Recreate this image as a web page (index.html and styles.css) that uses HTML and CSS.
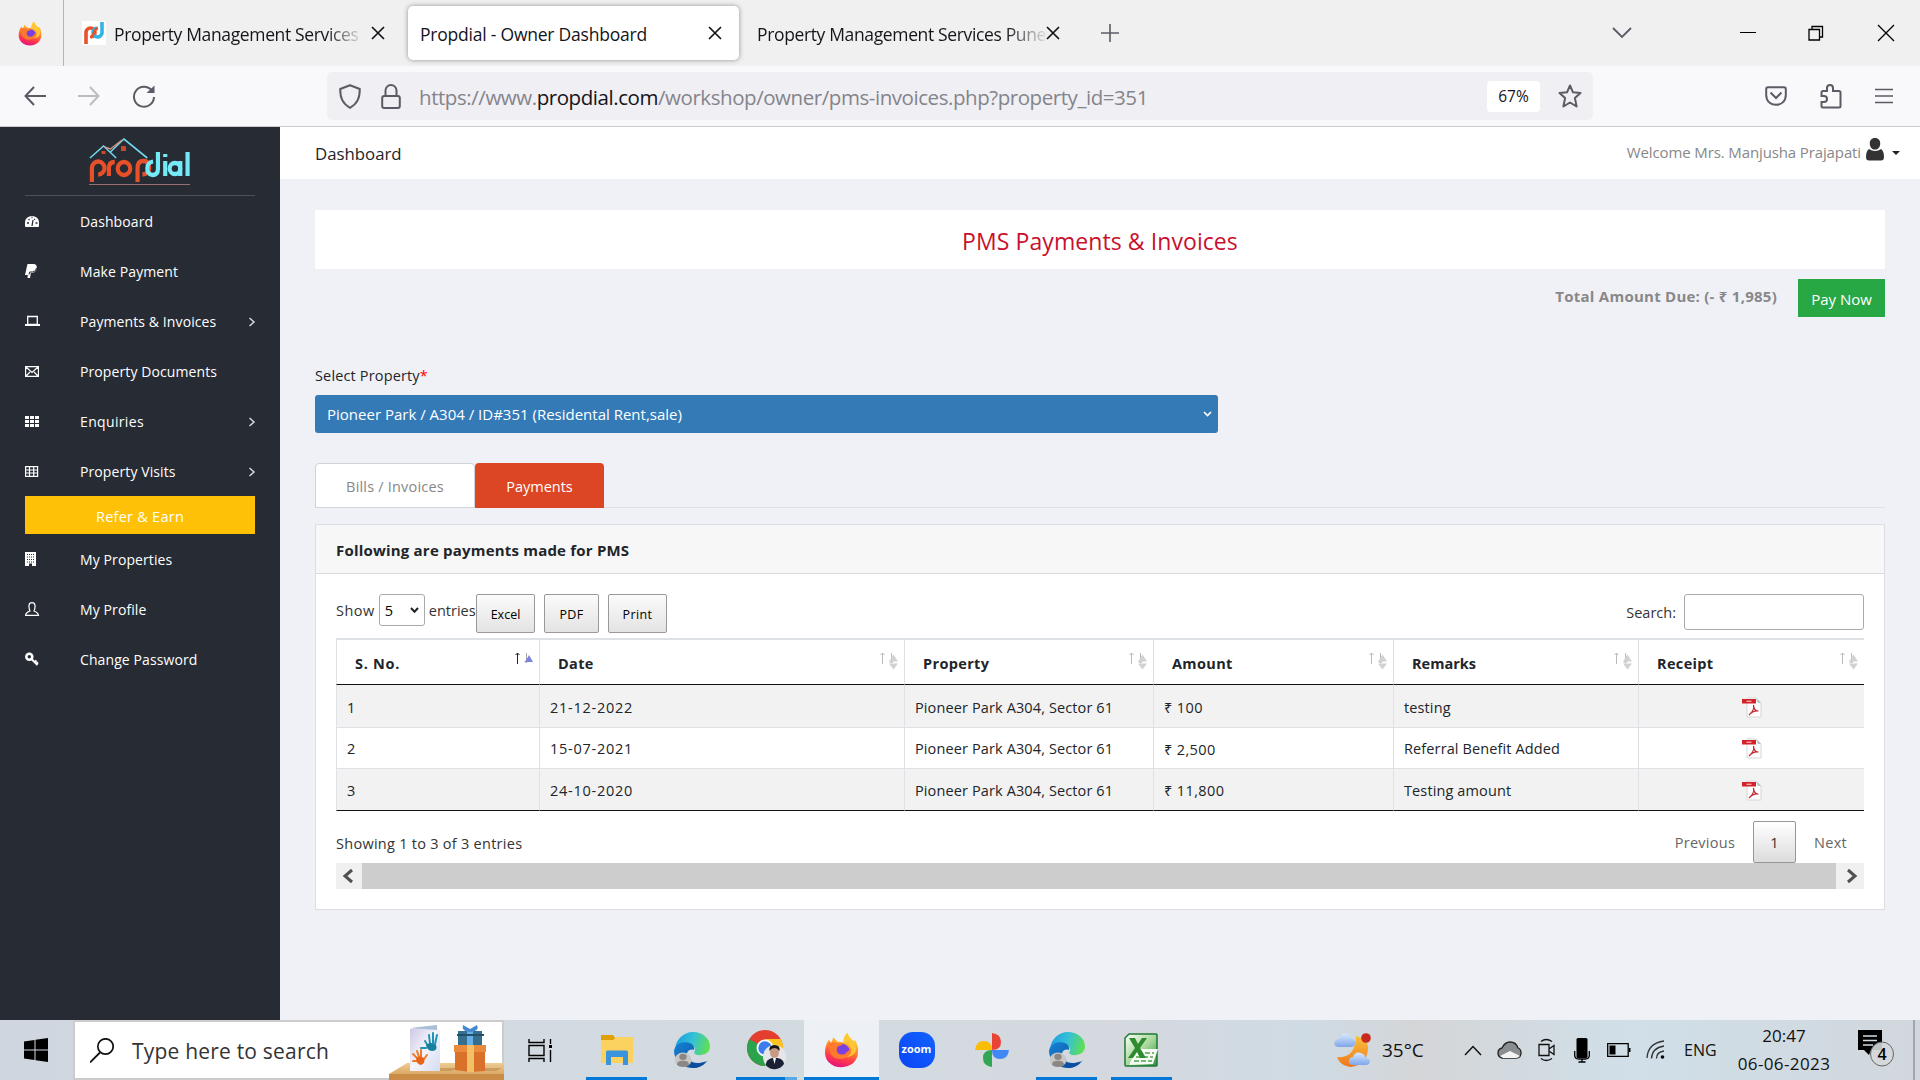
FILE: index.html
```html
<!DOCTYPE html>
<html lang="en">
<head>
<meta charset="utf-8">
<title>Propdial - Owner Dashboard</title>
<link rel="stylesheet" href="styles.css">
</head>
<body>
<svg class="defs" aria-hidden="true">
  <defs>
    <linearGradient id="ffBody" x1="0.7" y1="0" x2="0.4" y2="1"><stop offset="0" stop-color="#fff04a"/><stop offset=".4" stop-color="#ff9a28"/><stop offset=".75" stop-color="#ff3b4a"/><stop offset="1" stop-color="#e5127f"/></linearGradient>
    <linearGradient id="edgeTop" x1="0" y1="0.3" x2="1" y2="0.5"><stop offset="0" stop-color="#1b9de2"/><stop offset=".5" stop-color="#35c1d6"/><stop offset="1" stop-color="#5fe04f"/></linearGradient>
    <linearGradient id="edgeLow" x1="0" y1="0" x2="1" y2="1"><stop offset="0" stop-color="#1583d8"/><stop offset="1" stop-color="#0c4a94"/></linearGradient>
    <linearGradient id="moon" x1="0" y1="0" x2="0" y2="1"><stop offset="0" stop-color="#f9c23c"/><stop offset="1" stop-color="#f0761e"/></linearGradient>
    <linearGradient id="cloudFill" x1="0" y1="0" x2="0" y2="1"><stop offset="0" stop-color="#d8e9fd"/><stop offset="1" stop-color="#7fa6ea"/></linearGradient>
    <linearGradient id="shelf" x1="0" y1="0" x2="0" y2="1"><stop offset="0" stop-color="#efcb92"/><stop offset="1" stop-color="#dba965"/></linearGradient>
    <linearGradient id="cardPaper" x1="0" y1="0" x2="1" y2="1"><stop offset="0" stop-color="#c9c4e4"/><stop offset=".5" stop-color="#f5f3fb"/><stop offset="1" stop-color="#d3ddf2"/></linearGradient>
    <linearGradient id="xlFill" x1="0" y1="0" x2="1" y2="1"><stop offset="0" stop-color="#fff"/><stop offset=".5" stop-color="#a9d99b"/><stop offset="1" stop-color="#2f8f3e"/></linearGradient>
  </defs>
  <symbol id="firefox" viewBox="0 0 36 44" preserveAspectRatio="none">
    <path d="M18 43C8 43 1 35.500 1 25c0-6 1.500-11 4-15.500l2.500 4 2-7L14 12c3 0 5 .5 6 1 0-5 1.500-9 4-12 1.500 5 4 6.500 6 10l2-1c2 4 3.500 9 3 15.500C34.500 36 27.500 43 18 43z" fill="url(#ffBody)"/>
    <circle cx="18" cy="23" r="8.500" fill="#7a41e0"/>
    <path d="M4 14c4-2 8-2 10 0l6-1c-1 3-3 4-6 5-1 4 2 7 6 7 4 0 6-2 7-5 2 7-3 13-10 13S6 28 6 22z" fill="#ff7a2d"/>
    <path d="M20 13c4 0 7 3 8 7 1 6-2 9-5 11 8-1 12-8 9-16-3-5-7-8-8-14-3 3-4 8-4 12z" fill="#ffc736"/>
    <circle cx="18.500" cy="22" r="5.500" fill="#7a41e0"/>
  </symbol>
  <symbol id="edge" viewBox="0 0 36 42" preserveAspectRatio="none">
    <path d="M1 20C2 8 10 0 19 0c10 0 17 8 17 17 0 7-5 10-11 10-4 0-6-2-4-5 1-6-5-9-10-9-4 0-8 3-10 7z" fill="url(#edgeTop)"/>
    <path d="M0 22c1-7 7-11 12-10 6 0 9 5 8 9-5-2-8 3-7 8 2 7 10 9 19 5-3 5-8 8-14 8C8 42 0 33 0 22z" fill="url(#edgeLow)"/>
    <path d="M13 24c-1 9 6 14 13 13 4-.5 6-2 8-4-4 6-9 9-15 9-7-2-11-10-6-18z" fill="#0d4f9e"/>
    <circle cx="9" cy="32.500" r="8.500" fill="#c9c7c5"/><circle cx="9" cy="29" r="3.700" fill="#8a8784"/><path d="M3 38.500c0-4 2.500-5 6-5s6 1 6 5a9 9 0 0 1-12 0z" fill="#8a8784"/>
  </symbol>
  <symbol id="pdf" viewBox="0 0 20 21">
    <path d="M5 1h9l5 5v14H5z" fill="#fff" stroke="#d5d5d5"/><path d="M14 1l5 5h-3z" fill="#b9bec2"/>
    <rect x="0" y="2" width="14" height="4.500" fill="#d2232a"/><path d="M4.500 4.300h5" stroke="#f3a6a8" stroke-width="1.400"/>
    <path d="M11.500 8c.8 3-1 7-4.500 10 3-3.500 6-4.500 9.500-4-3 .2-4.700-2-5-6z" fill="none" stroke="#c22a30" stroke-width="1.200"/>
  </symbol>
  <symbol id="sort" viewBox="0 0 24 20">
    <path d="M4.500 14V3M2.500 5l2-2 2 2M13.500 3v10M11.500 11l2 2 2-2" fill="none" stroke="#b9babc"/>
    <path d="M11 11.500l4.500-7 4.500 7zM11 13.500h9l-4.500 6z" fill="#d2d2d2"/>
  </symbol>
  <symbol id="close" viewBox="0 0 14 14"><path d="M1 1l12 12M13 1L1 13" stroke="#15141a" stroke-width="1.700" fill="none"/></symbol>
  <symbol id="chev" viewBox="0 0 8 10"><path d="M1.500 1l4.500 4-4.500 4" fill="none" stroke="#d7dade" stroke-width="1.500"/></symbol>
</svg>

<header class="tabs">
  <div class="pinned"><svg width="24" height="25"><use href="#firefox"/></svg></div>
  <div class="tab first">
    <svg width="24" height="24" viewBox="0 0 24 24"><path d="M0 0h24v24H0z" fill="#fff"/><path d="M4 23V11a4.500 4.500 0 1 1 5 5" fill="none" stroke="#e8512a" stroke-width="3.600"/><path d="M20 1v11a4.500 4.500 0 1 1-5-5" fill="none" stroke="#31b3e6" stroke-width="3.600"/><path d="M8 16c5 0 3-8 8-9" fill="none" stroke="#e8512a" stroke-width="2.500"/></svg>
    <span class="tab-title faded">Property Management Services</span>
    <svg class="x" width="14" height="14"><use href="#close"/></svg>
  </div>
  <div class="tab active">
    <span class="tab-title">Propdial - Owner Dashboard</span>
    <svg class="x" width="14" height="14"><use href="#close"/></svg>
  </div>
  <div class="tab third">
    <span class="tab-title faded">Property Management Services Pune</span>
    <svg class="x" width="14" height="14"><use href="#close"/></svg>
  </div>
  <svg class="plus" width="20" height="20" viewBox="0 0 20 20"><path d="M10 1v18M1 10h18" stroke="#5b5b66" stroke-width="1.600"/></svg>
  <div class="winctl">
    <svg width="20" height="12" viewBox="0 0 20 12"><path d="M1 1l9 9 9-9" fill="none" stroke="#5b5b66" stroke-width="1.800"/></svg>
    <svg width="16" height="16" viewBox="0 0 16 16"><path d="M0 7.500h16" stroke="#000"/></svg>
    <svg width="16" height="16" viewBox="0 0 16 16"><path d="M1 4.500h10.500V15H1zM4 4.500V1.500h10.500V12h-3" fill="none" stroke="#000" stroke-width="1.300"/></svg>
    <svg width="18" height="18" viewBox="0 0 18 18"><path d="M1 1l16 16M17 1L1 17" stroke="#000" stroke-width="1.300"/></svg>
  </div>
</header>

<nav class="toolbar">
  <div class="navbtns">
    <svg width="22" height="20" viewBox="0 0 22 20"><path d="M10 1L1.500 10l8.500 9M1.500 10H22" fill="none" stroke="#5b5b66" stroke-width="2"/></svg>
    <svg width="22" height="20" viewBox="0 0 22 20"><path d="M12 1l8.500 9-8.500 9M20.500 10H0" fill="none" stroke="#bcbcc2" stroke-width="2"/></svg>
    <svg width="24" height="24" viewBox="0 0 24 24"><path d="M20.500 7.500A10 10 0 1 0 22 13" fill="none" stroke="#5b5b66" stroke-width="2"/><path d="M22.500 1.500v7.500h-8z" fill="#5b5b66"/></svg>
  </div>
  <div class="urlbar">
    <svg width="22" height="25" viewBox="0 0 22 25"><path d="M11 1.200L20.800 5c0 9-2.300 14.500-9.800 18.800C3.500 19.500 1.200 14 1.200 5z" fill="none" stroke="#5b5b66" stroke-width="2" stroke-linejoin="round"/></svg>
    <svg class="lock" width="20" height="25" viewBox="0 0 20 25"><rect x="1.200" y="12" width="17.600" height="12" rx="2" fill="none" stroke="#5b5b66" stroke-width="2"/><path d="M4.500 12V6.500a5.500 5.500 0 0 1 11 0V12" fill="none" stroke="#5b5b66" stroke-width="2"/></svg>
    <span class="url">https://www.<b>propdial.com</b>/workshop/owner/pms-invoices.php?property_id=351</span>
    <span class="zoomlvl">67%</span>
    <svg width="24" height="24" viewBox="0 0 24 24"><path d="M12 1.500l3 6.800 7.500.7-5.600 5 1.700 8.500L12 18.500 5.400 22.500 7.100 14 1.500 9 9 8.300z" fill="none" stroke="#5b5b66" stroke-width="2" stroke-linejoin="round"/></svg>
  </div>
  <div class="tools">
    <svg width="22" height="20" viewBox="0 0 22 20"><path d="M3 1.200h16q1.800 0 1.800 1.800v6c0 6-4 9.800-9.800 9.800S1.200 15 1.200 9V3q0-1.800 1.800-1.800z" fill="none" stroke="#5b5b66" stroke-width="2"/><path d="M5.500 6.500L11 12l5.500-5.500" fill="none" stroke="#5b5b66" stroke-width="2"/></svg>
    <svg width="22" height="25" viewBox="0 0 22 25"><path d="M1.500 12V8.500q0-1.500 1.500-1.500h4V4a3 3 0 0 1 6 0v3h6q1.500 0 1.500 1.500V22q0 1.500-1.500 1.500H3q-1.500 0-1.500-1.500v-4H4a3 3 0 0 0 0-6z" fill="none" stroke="#5b5b66" stroke-width="2"/></svg>
    <svg width="18" height="16" viewBox="0 0 18 16"><path d="M0 1.500h18M0 8h18M0 14.500h18" stroke="#5b5b66" stroke-width="1.700"/></svg>
  </div>
</nav>

<div class="page">
  <aside class="side">
    <div class="logo">
      <svg width="101" height="50" viewBox="0 0 104 50" preserveAspectRatio="none">
        <path d="M1 20L15 8l13 12M22 14L36 1l24 19" fill="none" stroke="#6fd9ea" stroke-width="1.600"/><path d="M16 9l6 2 12-9" fill="none" stroke="#d98f7d" stroke-width="1.500"/><path d="M33 8h5v5h-5zM13 13h4v3h-4z" fill="#c8492d"/>
        <g fill="none" stroke="#e8502a" stroke-width="4.300"><path d="M3 44V30a6.500 6.500 0 1 1 6.500 6.500"/><path d="M20.500 38v-8q0-6 6-6"/><circle cx="36" cy="30.500" r="6.500"/><path d="M50 44V30q0-7 6-7t6 7q0 6-7 6.500"/></g>
        <g fill="none" stroke="#74e9f8" stroke-width="4.300"><path d="M71 14v17q0 6-6 6-5-1-5-6.500 0-6 6-7"/><path d="M78.500 23v15M78.500 16v3"/><circle cx="88.500" cy="30.500" r="5.500"/><path d="M94 23v15M101.500 14v24"/></g>
        <path d="M0 46.500h104" stroke="#9a6f73" stroke-width="1.200"/>
      </svg>
    </div>
    <ul class="menu">
      <li><svg viewBox="0 0 15 15"><path d="M0 12V8a7 6 0 0 1 14 0v4q0 1-1 1H1q-1 0-1-1z" fill="#fff"/><path d="M7 12l1-6M2 9h2M10.500 9h2M3.500 5l1 1M10 5l-.8.800M6.500 3.500h1" stroke="#272b33" stroke-width="1.300"/></svg><span>Dashboard</span></li>
      <li><svg viewBox="0 0 15 15"><path d="M2.500 0h6q3.500 0 3.300 4-.5 5-6 5L5 14H2.500l.3-3H0z" fill="#fff"/><path d="M4 10.500l.7-2.500h3q3.500-.5 3.800-4" stroke="#272b33" fill="none"/></svg><span>Make Payment</span></li>
      <li><svg viewBox="0 0 15 15"><path d="M2.700 10.500V2.500h9.600v8z" fill="none" stroke="#fff" stroke-width="1.300"/><path d="M0 10h15v2H0z" fill="#fff"/></svg><span>Payments &amp; Invoices</span><svg class="chev"><use href="#chev"/></svg></li>
      <li><svg viewBox="0 0 15 15"><path d="M.6 2.600h12.800v9.800H.6zM1 3l6 5.500L13 3M1 12l4-4M13 12L9 8" fill="none" stroke="#fff" stroke-width="1.200"/></svg><span>Property Documents</span></li>
      <li><svg viewBox="0 0 15 15"><path d="M0 2h4v3H0zM5 2h4v3H5zM10 2h4v3h-4zM0 6h4v3H0zM5 6h4v3H5zM10 6h4v3h-4zM0 10h4v3H0zM5 10h4v3H5zM10 10h4v3h-4z" fill="#fff"/></svg><span class="ls3">Enquiries</span><svg class="chev"><use href="#chev"/></svg></li>
      <li><svg viewBox="0 0 15 15"><path d="M.6 2.600h12v9.800H.6zM0 6h13M0 9h13M4.500 2.500v10M8.700 2.500v10" fill="none" stroke="#fff" stroke-width="1.200"/></svg><span>Property Visits</span><svg class="chev"><use href="#chev"/></svg></li>
    </ul>
    <a class="refer">Refer &amp; Earn</a>
    <ul class="menu lower">
      <li><svg viewBox="0 0 15 15"><path d="M0 0h11v14H0z" fill="#fff"/><path d="M2 2.500h7M2 5h7M2 7.500h7M2 10h7" stroke="#272b33" stroke-dasharray="1 1"/><path d="M4 11.500h3V14H4z" fill="#272b33"/></svg><span>My Properties</span></li>
      <li><svg viewBox="0 0 15 15"><path d="M5 9Q3.700 6 4 3.500 4.300.7 7 .7t3 2.800Q10.300 6 9 9q4 1.500 4.500 4.300H.5Q1 10.500 5 9z" fill="none" stroke="#fff" stroke-width="1.200"/></svg><span>My Profile</span></li>
      <li><svg viewBox="0 0 15 15"><circle cx="4.300" cy="4.800" r="3" fill="none" stroke="#fff" stroke-width="2.500"/><path d="M6.500 7l6 6M9.500 10.500l2-2M11.300 12l1.700-1.700" stroke="#fff" stroke-width="2" fill="none"/></svg><span>Change Password</span></li>
    </ul>
  </aside>

  <main class="main">
    <div class="topbar">
      <span class="crumb">Dashboard</span>
      <div class="user">
        <span>Welcome Mrs. Manjusha Prajapati</span>
        <svg width="18" height="23" viewBox="0 0 18 23"><path d="M9 0c3.500 0 5.500 2.500 5.200 6-.2 3.500-2.200 5.500-5.200 5.500S4 9.500 3.800 6C3.500 2.500 5.500 0 9 0z" fill="#333"/><path d="M3 11q2.500 2 6 2t6-2q3 2 3 8 0 3.500-3 3.500H3q-3 0-3-3.500 0-6 3-8z" fill="#333"/></svg>
        <i class="caret"></i>
      </div>
    </div>
    <div class="content">
      <h1>PMS Payments &amp; Invoices</h1>
      <div class="due"><b>Total Amount Due: (- ₹ 1,985)</b><a class="pay">Pay Now</a></div>
      <label class="sel-label"><span>Select Property</span><em>*</em></label>
      <div class="select"><span>Pioneer Park / A304 / ID#351 (Residental Rent,sale)</span><svg width="9" height="6" viewBox="0 0 9 6"><path d="M1 1l3.500 3.500L8 1" fill="none" stroke="#fff" stroke-width="1.600"/></svg></div>
      <div class="navtabs"><a class="bills">Bills / Invoices</a><a class="pays">Payments</a></div>
      <section class="card">
        <h2>Following are payments made for PMS</h2>
        <div class="body">
          <div class="controls">
            <label class="show"><span class="ls5">Show</span><span class="len">5<svg width="9" height="7" viewBox="0 0 9 7"><path d="M1 1l3.500 3.800L8 1" fill="none" stroke="#222" stroke-width="2"/></svg></span><span>entries</span></label>
            <button class="b1">Excel</button><button class="b2">PDF</button><button class="b3">Print</button>
            <label class="search"><span>Search:</span><input type="text"></label>
          </div>
          <table>
            <colgroup><col class="c1"><col class="c2"><col class="c3"><col class="c4"><col class="c5"><col class="c6"></colgroup>
            <thead><tr>
              <th><div><span class="ls7">S. No.</span><svg viewBox="0 0 24 20"><path d="M4.500 14V3M2.500 5l2-2 2 2" fill="none" stroke="#222"/><path d="M13.500 3v10M11.500 11l2 2" fill="none" stroke="#aaa"/><path d="M12 12l4-7 4 7z" fill="#7d83dc"/></svg></div></th>
              <th><div><span>Date</span><svg><use href="#sort"/></svg></div></th>
              <th><div><span>Property</span><svg><use href="#sort"/></svg></div></th>
              <th><div><span>Amount</span><svg><use href="#sort"/></svg></div></th>
              <th><div><span class="ls0">Remarks</span><svg><use href="#sort"/></svg></div></th>
              <th><div><span>Receipt</span><svg><use href="#sort"/></svg></div></th>
            </tr></thead>
            <tbody>
              <tr><td>1</td><td class="num">21-12-2022</td><td>Pioneer Park A304, Sector 61</td><td class="amt">₹ 100</td><td>testing</td><td class="rc"><svg><use href="#pdf"/></svg></td></tr>
              <tr><td>2</td><td class="num">15-07-2021</td><td>Pioneer Park A304, Sector 61</td><td class="amt">₹ 2,500</td><td>Referral Benefit Added</td><td class="rc"><svg><use href="#pdf"/></svg></td></tr>
              <tr><td>3</td><td class="num">24-10-2020</td><td>Pioneer Park A304, Sector 61</td><td class="amt">₹ 11,800</td><td>Testing amount</td><td class="rc"><svg><use href="#pdf"/></svg></td></tr>
            </tbody>
          </table>
          <div class="foot">
            <span class="info">Showing 1 to 3 of 3 entries</span>
            <div class="pager"><span>Previous</span><b class="cur">1</b><span>Next</span></div>
          </div>
          <div class="hscroll">
            <svg width="26" height="26" viewBox="0 0 26 26"><path d="M16 7l-7 6 7 6" fill="none" stroke="#505050" stroke-width="3"/></svg>
            <i></i>
            <svg width="28" height="26" viewBox="0 0 28 26"><path d="M12 7l7 6-7 6" fill="none" stroke="#505050" stroke-width="3"/></svg>
          </div>
        </div>
      </section>
    </div>
  </main>
</div>

<footer class="taskbar">
  <div class="start"><svg width="24" height="24" viewBox="0 0 24 24"><path d="M0 3.500l10.500-1.500v9.500H0zM11.500 1.800L24 0v11.500H11.500zM0 12.500h10.500V22L0 20.500zM11.500 12.500H24V24l-12.500-1.800z"/></svg></div>
  <div class="find">
    <svg width="24" height="25" viewBox="0 0 24 25"><circle cx="15.500" cy="8.500" r="7.700" fill="none" stroke="#111" stroke-width="1.700"/><path d="M10 14.500L0 24.500" stroke="#111" stroke-width="1.800"/></svg>
    <span>Type here to search</span>
    <svg class="art" width="115" height="60" viewBox="0 0 115 60">
      <path d="M18 43h97v11H0z" fill="url(#shelf)"/><path d="M0 54h115v6H0z" fill="#c98d47"/>
      <path d="M50 51h12l8-3H50zM93 51h14l6-3H93z" fill="#b98a4d" opacity=".6"/>
      <path d="M21 9l27-4v4l3 1v41H21z" fill="url(#cardPaper)"/><path d="M21 8l27-3v5z" fill="#a9bfd6"/>
      <g stroke="#1f93b5" stroke-width="2" stroke-linecap="round" fill="none"><path d="M39 26l-3-5M41 24l-1-9M44 23v-10M46 24l2-9M37 28l-5 0"/></g><path d="M37 25q5-4 10 0 2 5-3 6-6 0-7-6z" fill="#17809f"/>
      <g stroke="#ee7a2b" stroke-width="2" stroke-linecap="round" fill="none"><path d="M28 38l-4-4M30 37l-2-6M32 37v-7M35 39l3-4M28 41l-4 0"/></g><path d="M27 38q4-3 8 0 2 5-3 7-5-1-5-7z" fill="#e8641a"/>
      <path d="M68 25h26v10H68z" fill="#2c5f7c"/><path d="M69 11h24v14H69z" fill="#356f8d"/><path d="M78 11h6v15h-6z" fill="#66b0ea"/><path d="M81 12q-9-1-7-7l7 4 7-4q3 6-7 7z" fill="#4587d0"/><path d="M68 15h27" stroke="#254f69" stroke-width="2"/>
      <path d="M66 29h30v22l-15 1-15-2z" fill="#d9712a"/><path d="M65 25h32v7H65z" fill="#e88b3b"/><path d="M78 25h7v27h-7z" fill="#f2c065"/>
    </svg>
  </div>
  <div class="tv"><svg width="25" height="25" viewBox="0 0 25 25"><path d="M1 7.500h15v10H1zM1 1v3.500h15V1M1 24v-3.500h15V24M22.500 1v5M22.500 12v12" fill="none" stroke="#000" stroke-width="1.400"/><path d="M21 7h3v3h-3z"/></svg></div>
  <div class="apps">
    <div class="app run"><svg width="34" height="32" viewBox="0 0 34 32"><path d="M1 1h12l3 4v6H1z" fill="#dfa004"/><path d="M1 6h12l3-3h16q1 0 1 1v24q0 1-1 1H1z" fill="#fbd25f"/><path d="M6 31V18q0-1.500 1.500-1.500h19Q28 16.500 28 18v13h-5v-8H11v8z" fill="#3a93dd"/></svg></div>
    <div class="app"><svg width="36" height="36"><use href="#edge"/></svg></div>
    <div class="app run multi"><svg width="40" height="40" viewBox="0 0 40 40"><circle cx="18" cy="18" r="18" fill="#e53d30"/><path d="M18 18L2.500 9A18 18 0 0 0 18 36l8-14z" fill="#2ba24c"/><path d="M18 9h15.600A18 18 0 0 1 18 36z" fill="#fcc31e"/><circle cx="18" cy="18" r="8.500" fill="#fff"/><circle cx="18" cy="18" r="6.700" fill="#3b7ded"/><ellipse cx="27.500" cy="27" rx="11.500" ry="12" fill="#e6e6ea"/><path d="M18.500 35q1-6 7-7h5q6 1 6.500 6a11.500 11.500 0 0 1-18.500 1z" fill="#1a2134"/><ellipse cx="27.500" cy="22.500" rx="4.500" ry="5.500" fill="#c99a82"/><path d="M22.500 21q-1-6 5-6t5 6q-2-3-5-3t-5 3z" fill="#151515"/><path d="M26 28h3l-1.500 6z" fill="#fff"/></svg></div>
    <div class="app run on"><svg width="35" height="36"><use href="#firefox"/></svg></div>
    <div class="app"><span class="zoomapp">zoom</span></div>
    <div class="app"><svg width="34" height="34" viewBox="0 0 34 34"><path d="M17 0q9 1 9 9t-9 8z" fill="#e94435"/><path d="M34 17q-1 9-9 9t-8-9z" fill="#4386f5"/><path d="M17 34q-9-1-9-9t9-8z" fill="#32a652"/><path d="M0 17q1-9 9-9t8 9z" fill="#fbbc05"/></svg></div>
    <div class="app run"><svg width="36" height="36"><use href="#edge"/></svg></div>
    <div class="app run"><svg width="36" height="34" viewBox="0 0 36 34"><path d="M5 1h27q1 0 1 1v30q0 1-1 1H2q-1 0-1-1V5z" fill="url(#xlFill)" stroke="#1f7a32" stroke-width="1.500"/><path d="M12 16l22 0-5 15-24 1z" fill="#f4fbf2"/><path d="M14 20h16M12 24h17M10 28h18" stroke="#79b877" stroke-width="2" stroke-dasharray="5 2"/><path d="M5 5h6l3 6 4-6h5l-7 10 6 10h-6l-3-6-4 6H4l7-10z" fill="#2f8b2f"/></svg></div>
  </div>
  <div class="tray">
    <svg class="wx" width="37" height="34" viewBox="0 0 37 34"><path d="M22 3q13 3 12 14-2 15-17 17Q6 33 3 24q18 2 19-21z" fill="url(#moon)"/><path d="M4 14q-5-1-3-6 2-2 4-2 2-7 9-5 3 2 3 4 5 1 4 6-1 3-4 3z" fill="url(#cloudFill)"/><path d="M18 32q-4-1-3-5 1-3 4-3 2-6 8-4 4 1 4 4 5 1 5 5-1 3-4 3z" fill="url(#cloudFill)"/><circle cx="32" cy="5" r="4.800" fill="#c9291d"/></svg>
    <span class="temp">35°C</span>
    <svg class="up" width="18" height="11" viewBox="0 0 18 11"><path d="M1 10l8-8.500L17 10" fill="none" stroke="#111" stroke-width="1.500"/></svg>
    <svg class="cl" width="25" height="18" viewBox="0 0 25 18"><path d="M5 17q-4-1-4-5t4-5Q8 1 13 1q6 0 8 6 3 1 3 5 0 5-5 5z" fill="#8b8e90" stroke="#222" stroke-width="1.300"/><path d="M3 15l10-5 10 5q-2 2-4 2H6z" fill="#f3f3f3"/></svg>
    <svg class="cam" width="17" height="24" viewBox="0 0 17 24"><path d="M1 6.500h10v11H1zM11 11l5-3.500v9L11 13M3 3.500q5-4 11 0M3 20.500q5 4 11 0" fill="none" stroke="#111" stroke-width="1.300"/></svg>
    <svg class="mic" width="16" height="25" viewBox="0 0 16 25"><rect x="2.500" y="0" width="11" height="20" rx="1.500"/><path d="M.7 13v4q0 4 4 4h6.600q4 0 4-4v-4M8 21v3M4.500 24h7" fill="none" stroke="#000" stroke-width="1.300"/></svg>
    <svg class="bat" width="24" height="14" viewBox="0 0 24 14"><path d="M.7 .7h20.500v12.600H.7z" fill="none" stroke="#000" stroke-width="1.300"/><path d="M2.500 2.500h6v9h-6zM22 5h1.500v4H22z"/></svg>
    <svg class="wifi" width="20" height="20" viewBox="0 0 20 20"><path d="M1 18Q2 3 18 1M5.500 18.500Q6 8 18 6M10.500 18.500Q10.500 12 18 11" fill="none" stroke="#333" stroke-width="1.300"/><circle cx="16.500" cy="17" r="1.800"/></svg>
    <span class="eng">ENG</span>
    <div class="clock"><span>20:47</span><span class="date">06-06-2023</span></div>
    <svg class="note" width="37" height="38" viewBox="0 0 37 38"><path d="M0 1h24v20H13l-2 5-5-5H0z"/><path d="M5 7h14M5 11.500h14M5 16h10" stroke="#d5dce3" stroke-width="1.300"/><ellipse cx="24" cy="25" rx="11.500" ry="12" fill="#d4d8da" fill-opacity=".9" stroke="#666"/><text x="24" y="31" text-anchor="middle" class="badge">4</text></svg>
    <i class="peek"></i>
  </div>
</footer>
</body>
</html>
```
FILE: styles.css
```css
* { box-sizing: border-box; }
body { margin: 0; width: 1920px; height: 1080px; overflow: hidden; display: flex; flex-direction: column; font-family: "Open Sans", "Noto Sans", sans-serif; font-size: 14.5px; color: #212529; background: #f0f1f7; }
svg { flex: none; display: block; }
span, b, a { white-space: nowrap; }
.defs { position: absolute; width: 0; height: 0; }

.tabs { height: 66px; background: #f0f0f0; display: flex; align-items: center; flex: none; color: #15141a; font-size: 17.5px; letter-spacing: -.36px; }
.pinned { width: 64px; height: 66px; padding: 21px 0 0 18px; border-right: 1px solid #b5b5b8; }
.tab { display: flex; align-items: center; justify-content: space-between; height: 54px; }
.tab.first { width: 322px; padding-left: 18px; }
.first .tab-title { width: 247px; margin-left: 8px; }
.first .x { margin-right: auto; margin-left: 10px; }
.tab.active { width: 331px; margin-left: 22px; padding: 0 17px 0 12px; background: #fff; border-radius: 5px; box-shadow: 0 0 5px rgba(0, 0, 0, .4); letter-spacing: -.22px; }
.tab.third { padding-left: 18px; width: 321px; }
.third .tab-title { width: 290px; }
.tab-title { padding-top: 1px; }
.faded { -webkit-mask-image: linear-gradient(to right, #000 86%, transparent 101%); mask-image: linear-gradient(to right, #000 86%, transparent 101%); }
.plus { margin-left: 40px; }
.winctl { margin-left: auto; padding-right: 25px; display: flex; align-items: center; }
.winctl svg:nth-child(2) { margin-left: 108px; }
.winctl svg:nth-child(3) { margin-left: 52px; }
.winctl svg:nth-child(4) { margin-left: 53px; }

.toolbar { height: 61px; flex: none; background: #f9f9fb; border-bottom: 1px solid #cccccf; display: flex; align-items: center; }
.navbtns { display: flex; align-items: center; gap: 32px; width: 327px; padding-left: 24px; }
.urlbar { width: 1266px; height: 48px; border-radius: 5px; background: #f0eff4; display: flex; align-items: center; padding: 0 11px 0 12px; }
.lock { margin-left: 20px; }
.url { margin: 2px auto 0 18px; font-size: 20.5px; letter-spacing: -.44px; color: #84848b; }
.url b { font-weight: 400; color: #15141a; }
.zoomlvl { width: 53px; height: 31px; margin-right: 18px; border-radius: 4px; background: #fff; display: flex; align-items: center; justify-content: center; font-size: 15.5px; color: #15141a; }
.tools { display: flex; align-items: center; justify-content: space-between; width: 128px; margin-left: 172px; }

.page { flex: 1; display: flex; min-height: 0; }
.side { width: 280px; background: #272b33; color: #fff; font-size: 14px; letter-spacing: .1px; padding: 0 25px; }
.logo { height: 69px; border-bottom: 1px solid #4c5057; padding: 11px 0 0 64px; }
.menu { list-style: none; margin: 0; padding: 1px 0 0; }
.menu.lower { padding: 0; }
.menu li { height: 50px; display: flex; align-items: center; }
.menu li > svg:first-child { width: 15px; height: 15px; margin-top: -1px; }
.menu li > span { margin: -2px 0 0 40px; }
.menu li > .chev { width: 8px; height: 10px; margin: -1px -1px 0 auto; }
.refer { display: flex; align-items: center; justify-content: center; height: 38px; background: #ffc107; margin: -1px 0 1px; padding-top: 3px; font-size: 14.5px; letter-spacing: .25px; }
.ls3 { letter-spacing: .35px; }
.ls5 { letter-spacing: .5px; }

.main { flex: 1; display: flex; flex-direction: column; }
.topbar { height: 52px; background: #fff; display: flex; justify-content: space-between; align-items: center; padding: 0 20px 0 35px; }
.crumb { font-size: 16.8px; }
.user { display: flex; align-items: center; color: #888; font-size: 15px; letter-spacing: -.12px; }
.user span { margin-top: -2px; }
.user svg { margin: -8px 8px 0 5px; }
.caret { border: 4px solid transparent; border-top-color: #222; border-bottom: 0; margin-top: -1px; }
.content { padding: 31px 35px 0; }
h1 { margin: 0; height: 59px; background: #fff; display: flex; align-items: center; justify-content: center; padding-top: 3px; font-size: 23px; letter-spacing: .08px; font-weight: 400; color: #c8102e; }
.due { display: flex; justify-content: flex-end; align-items: center; margin-top: 10px; color: #888; }
.due b { margin: -4px 21px 0 0; font-size: 15px; letter-spacing: .25px; }
.pay { width: 87px; height: 38px; background: #28a745; color: #fff; display: flex; align-items: center; justify-content: center; padding-top: 1px; font-size: 15px; }
.sel-label { display: flex; align-items: center; height: 20px; margin-top: 48px; letter-spacing: .15px; }
.sel-label em { color: #f00; font-style: normal; }
.select { width: 903px; height: 38px; margin-top: 10px; border-radius: 3px; background: #337ab7; color: #fff; display: flex; align-items: center; justify-content: space-between; padding: 0 6px 0 12px; font-size: 15px; }
.navtabs { display: flex; margin-top: 30px; height: 45px; border-bottom: 1px solid #dee2e6; }
.navtabs a { height: 45px; display: flex; align-items: center; justify-content: center; border-radius: 4px 4px 0 0; padding-top: 2px; }
.bills { width: 160px; background: #fff; border: 1px solid #d0d3d8; color: #888; letter-spacing: .2px; }
.pays { width: 129px; background: #dd4624; color: #fff; }
.card { margin-top: 16px; height: 386px; border: 1px solid #dcdde1; background: #fff; }
h2 { margin: 0; height: 49px; background: #f7f7f7; border-bottom: 1px solid #d9d9d9; padding: 2px 20px 0; display: flex; align-items: center; font-size: 15px; letter-spacing: .2px; font-weight: 700; }
.body { padding: 20px 20px 0; }
.controls { display: flex; align-items: flex-start; height: 44px; color: #333; }
.show { display: flex; align-items: center; height: 32px; width: 140px; }
.len { width: 46px; height: 32px; margin: 0 4px; padding: 0 5px; border: 1px solid #aaa; border-radius: 3px; display: flex; align-items: center; justify-content: space-between; color: #000; }
button { height: 39px; margin-right: 9px; padding: 2px 0 0; border: 1px solid #999; border-radius: 2px; background: linear-gradient(#fbfbfb, #e3e3e3); font: 12.5px "Open Sans", sans-serif; color: #000; }
.b1, .b3 { width: 59px; }
.b2 { width: 55px; }
.b2, .b3 { letter-spacing: .4px; }
.search { margin-left: auto; display: flex; align-items: center; gap: 8px; }
.search span { padding-top: 1px; }
input { width: 180px; height: 36px; border: 1px solid #aaa; border-radius: 3px; padding: 0; }
table { width: 1528px; table-layout: fixed; border-collapse: separate; border-spacing: 0; letter-spacing: .12px; }
.c1 { width: 203px; } .c2 { width: 365px; } .c3 { width: 249px; } .c4 { width: 240px; } .c5 { width: 245px; } .c6 { width: 226px; }
th { height: 47px; padding: 2px 0 0; border-top: 2px solid #dee2e6; border-left: 1px solid #dee2e6; border-bottom: 1px solid #111; text-align: left; letter-spacing: .35px; }
.ls7 { letter-spacing: .7px; }
.ls0 { letter-spacing: 0; }
th div { display: flex; align-items: center; justify-content: space-between; padding: 0 2px 0 18px; }
th svg { width: 24px; height: 20px; margin-top: -7px; }
td { padding: 1px 0 0 10px; height: 42px; border-left: 1px solid #dee2e6; border-bottom: 1px solid #dee2e6; }
.num { letter-spacing: .75px; }
.amt { letter-spacing: .38px; }
tbody tr:nth-child(odd) { background: #f2f2f2; }
tbody tr:first-child td { height: 43px; padding-top: 2px; }
tbody tr:nth-child(2) td { height: 41px; }
tbody tr:last-child td { border-bottom-color: #111; }
td.rc { padding-left: 103px; }
.rc svg { width: 20px; height: 21px; }
.foot { height: 52px; padding-top: 10px; display: flex; justify-content: space-between; color: #333; letter-spacing: .27px; }
.info { margin-top: 13px; }
.pager { display: flex; align-items: center; height: 42px; color: #666; padding-right: 17px; }
.cur { width: 43px; height: 42px; margin: 0 18px; border: 1px solid #979797; border-radius: 2px; background: linear-gradient(#fff, #dcdcdc); color: #333; font-weight: 400; display: flex; align-items: center; justify-content: center; }
.hscroll { display: flex; background: #f0f0f0; height: 26px; }
.hscroll i { flex: 1; background: #cdcdcd; }

.taskbar { height: 60px; flex: none; display: flex; align-items: center; background: linear-gradient(90deg, #d0d6df, #d3dae2 22%, #d2dbe0 45%, #d5d8df 58%, #cfdbe4 68%, #d4d6d8 74%, #d0dfe8 85%, #d1d7dd); color: #111; }
.start { width: 73px; padding-left: 24px; }
.find { width: 431px; height: 60px; background: #fff; border: 2px solid #ccc; display: flex; align-items: center; padding-left: 15px; font-size: 21px; letter-spacing: .2px; color: #333; }
.find > span { margin: 2px auto 0 18px; }
.art { margin: 0 -2px -2px 0; align-self: flex-end; }
.tv { width: 75px; padding-left: 24px; }
.apps { display: flex; height: 60px; }
.app { width: 75px; height: 60px; display: flex; align-items: center; justify-content: center; background: no-repeat center bottom / 61px 3px; }
.run { background-image: linear-gradient(#0078d7, #0078d7); }
.multi { background-image: linear-gradient(90deg, #0078d7 81%, #5aa9e6 81%); }
.on { background-image: linear-gradient(transparent 57px, #0078d7 57px); background-color: #edf1f5; background-size: 100% 60px; }
.zoomapp { width: 36px; height: 36px; border-radius: 14px; background: linear-gradient(45deg, #0a45f5, #1262ff); color: #fff; font: 700 11px/34px "Open Sans", sans-serif; text-align: center; }
.tray { margin-left: auto; display: flex; align-items: center; font-size: 18px; height: 60px; width: 586px; }
.temp { width: 43px; margin-left: 11px; font-size: 19px; }
.up { margin-left: 39px; } .cl { margin-left: 15px; } .cam { margin-left: 16px; } .mic { margin-left: 19px; } .bat { margin-left: 17px; } .wifi { margin-left: 15px; }
.eng { width: 33px; margin-left: 18px; font-size: 16px; }
.clock { width: 94px; margin-left: 20px; display: flex; flex-direction: column; align-items: center; font-size: 17px; line-height: 28px; }
.date { letter-spacing: .4px; }
.note { margin-left: 27px; margin-top: -4px; }
.badge { font: 600 16px "Open Sans", sans-serif; fill: #000; }
.peek { width: 2px; height: 60px; margin-left: 18px; background: #9da5ad; }
```
